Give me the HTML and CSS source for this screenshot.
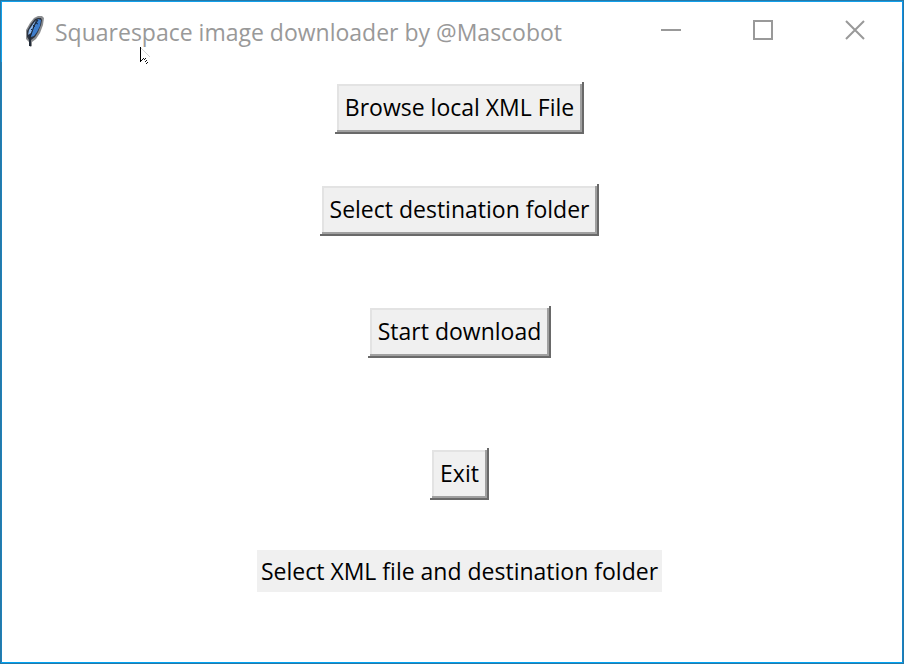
FILE: index.html
```html
<!DOCTYPE html>
<html lang="en">
<head>
<meta charset="utf-8">
<title>Squarespace image downloader by @Mascobot</title>
<link rel="stylesheet" href="styles.css">
</head>
<body>
<div class="window">
  <header class="titlebar">
    <svg class="feather" viewBox="0 0 20 32" aria-hidden="true">
      <path d="M14 0H18L20 2L19 9L16 17L12 23L8 26V30L6 31L5 26L2 23L2 14L6 7L10 2Z" fill="#8b8d90"/>
      <path d="M14 2H17L18 4L17 9L14 16L11 21L7 24V30H5V24L3 21V15L7 8L11 3Z" fill="#2d3440"/>
      <path d="M14 3L17 4L16 10L13 16L10 20L7 21L8 13Z" fill="#3e7dcb"/>
      <path d="M12 4L9 8L5 14L4 19L7 17L9 11Z" fill="#8fb9ec"/>
      <path d="M14 4L10 10L8 16L6 21V30" fill="none" stroke="#16202e"/>
      <path d="M9 9L11 11M7 13L9 15M12 7L14 8M4 19L7 21" fill="none" stroke="#1a2c49"/>
    </svg>
    <h1 class="title">Squarespace image downloader by @Mascobot</h1>
    <div class="controls">
      <button class="control" type="button" aria-label="Minimize">
        <svg viewBox="0 0 20 20" aria-hidden="true"><path d="M0 10H20"/></svg>
      </button>
      <button class="control" type="button" aria-label="Maximize">
        <svg viewBox="0 0 20 20" aria-hidden="true"><path d="M1 1H19V19H1Z"/></svg>
      </button>
      <button class="control" type="button" aria-label="Close">
        <svg viewBox="0 0 20 20" aria-hidden="true"><path d="M1 1L19 19M19 1L1 19"/></svg>
      </button>
    </div>
  </header>
  <main class="content">
    <button class="button" type="button">Browse local XML File</button>
    <button class="button destination" type="button">Select destination folder</button>
    <button class="button start" type="button">Start download</button>
    <button class="button exit" type="button">Exit</button>
    <p class="status" role="status">Select XML file and destination folder</p>
  </main>
  <svg class="cursor" viewBox="0 0 12 20" aria-hidden="true">
    <path d="M3 2L13 12" fill="none" stroke="#d4d4d4"/>
    <path d="M3 2H4V17H3Z" fill="#000"/>
    <path d="M4 15h1v1h-1zM5 14h1v1h-1zM6 13h1v1h-1zM8 13h1v1h-1zM7 14h1v1h-1zM9 15h1v1h-1zM8 16h1v1h-1zM10 17h1v1h-1zM9 18h1v1h-1z" fill="#111"/>
  </svg>
</div>
</body>
</html>
```
FILE: styles.css
```css
* {
  box-sizing: border-box;
}

body {
  margin: 0;
  background: #fff;
  font-family: "Open Sans", "Noto Sans", sans-serif;
}

.window {
  position: relative;
  min-height: 100vh;
  border: 1px solid #2579a8;
  padding: 1px;
  box-shadow:
    inset 0 1px #12a0ea,
    inset 0 -1px #00a2f2,
    inset 1px 0 #2080b8,
    inset -1px 0 #1583c8;
}

.titlebar {
  display: flex;
  align-items: center;
  height: 60px;
  padding: 0 1px 0 22px;
  box-shadow:
    -1px 0 #12a0ea,
    1px 0 #0c90e8;
}

.feather {
  width: 20px;
  height: 32px;
}

.title {
  flex: 1;
  margin: 0 0 0 11px;
  color: #999;
  font-size: 23px;
  font-weight: 400;
  line-height: 32px;
  white-space: nowrap;
}

.controls {
  display: flex;
  align-self: flex-start;
}

.control {
  display: grid;
  place-items: center;
  width: 92px;
  height: 56px;
  padding: 0;
  border: 0;
  background: none;
}

.control svg {
  width: 20px;
  height: 20px;
  fill: none;
  stroke: #999;
  stroke-width: 2;
}

.content {
  display: flex;
  flex-direction: column;
  align-items: center;
  padding: 20px 0 20px 15px;
}

.button {
  height: 52px;
  padding: 0 10px 2px;
  border: 0;
  background: #f0f0f0;
  box-shadow:
    inset -2px -2px #696969,
    inset 2px 2px #fff,
    inset -4px -4px #a0a0a0,
    inset 4px 4px #e3e3e3;
  color: #000;
  font-family: inherit;
  font-size: 23px;
  line-height: 32px;
  white-space: nowrap;
}

.destination {
  margin-top: 50px;
}

.start {
  margin-top: 70px;
}

.exit {
  margin-top: 90px;
}

.status {
  margin: 50px 0 0;
  padding: 5px 4px;
  background: #f0f0f0;
  font-size: 23px;
  line-height: 32px;
  white-space: nowrap;
}

.cursor {
  position: absolute;
  top: 44px;
  left: 136px;
  width: 12px;
  height: 20px;
  overflow: visible;
}
```
